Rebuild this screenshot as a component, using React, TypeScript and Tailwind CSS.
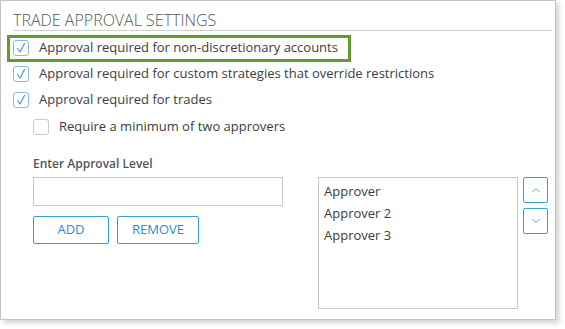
const Check = ({ checked }: { checked: boolean }) => (
  <span
    className={`flex h-4 w-4 shrink-0 items-center justify-center rounded-[3px] border bg-white ${
      checked ? 'border-[#8db6e2]' : 'border-[#c9c9c9]'
    }`}
  >
    {checked && (
      <svg width="12" height="12" viewBox="0 0 12 12" fill="none">
        <path d="M2.5 6.5 L5 10 L9.5 1.5" stroke="#4a8fdb" strokeWidth="1.1" strokeLinecap="round" strokeLinejoin="round" />
      </svg>
    )}
  </span>
);

const rows = [
  'Approval required for non-discretionary accounts',
  'Approval required for custom strategies that override restrictions',
  'Approval required for trades',
];

const approvers = ['Approver', 'Approver 2', 'Approver 3'];

export default function App() {
  return (
    <div className="h-[329px] w-[565px] bg-white font-['Open_Sans',sans-serif] text-[#3c3c3c]">
      <div className="h-[320px] w-[556px] border border-[#c4c4c4] bg-white pl-3 pr-[3px] pt-[9px] shadow-[3px_3px_5px_rgba(0,0,0,0.18)]">
        <h2 className="border-b border-[#d0d0d0] text-[16px] font-light uppercase leading-[20px] text-[#555]">
          Trade Approval Settings
        </h2>

        <div className="mt-[4px] flex flex-col">
          {rows.map((label, i) => (
            <div key={label} className="relative flex h-[26px] items-center gap-[10px] text-[13px]">
              {i === 0 && (
                <div className="pointer-events-none absolute -left-[6px] top-0 h-[27px] w-[344px] border-[3px] border-[#5d9e2c]" />
              )}
              <Check checked />
              <span>{label}</span>
            </div>
          ))}
          <div className="flex h-[27px] items-center gap-[10px] pl-5 text-[13px]">
            <Check checked={false} />
            <span>Require a minimum of two approvers</span>
          </div>
        </div>

        <div className="mt-[16px] flex items-start pl-5">
          <div className="flex w-[250px] flex-col">
            <label className="text-[12px] font-semibold leading-[16px] text-[#555]">Enter Approval Level</label>
            <input className="mt-[5px] h-[29px] w-[250px] border border-[#c9c9c9] bg-white px-2 text-[13px] outline-none" />
            <div className="mt-[10px] flex gap-2">
              <button className="h-[28px] w-[76px] rounded-[2px] border border-[#34a0da] text-[13px] uppercase text-[#2d8cc8]">
                Add
              </button>
              <button className="h-[28px] w-[82px] rounded-[2px] border border-[#34a0da] text-[13px] uppercase text-[#2d8cc8]">
                Remove
              </button>
            </div>
          </div>

          <ul className="ml-[35px] mt-[21px] h-[132px] w-[200px] border border-[#c9c9c9] pl-[5px] pt-[2px] text-[13px] leading-[22px]">
            {approvers.map((a) => (
              <li key={a}>{a}</li>
            ))}
          </ul>

          <div className="ml-[5px] mt-[21px] flex flex-col gap-[5px]">
            <button className="flex h-[26px] w-[25px] items-center justify-center rounded-[2px] border border-[#34a0da]">
              <svg width="10" height="6" viewBox="0 0 10 6" fill="none">
                <path d="M1.5 5 L5 1.5 L8.5 5" stroke="#4f9fd6" strokeWidth="1" />
              </svg>
            </button>
            <button className="flex h-[26px] w-[25px] items-center justify-center rounded-[2px] border border-[#34a0da]">
              <svg width="10" height="6" viewBox="0 0 10 6" fill="none">
                <path d="M1.5 1 L5 4.5 L8.5 1" stroke="#4f9fd6" strokeWidth="1" />
              </svg>
            </button>
          </div>
        </div>
      </div>
    </div>
  );
}
